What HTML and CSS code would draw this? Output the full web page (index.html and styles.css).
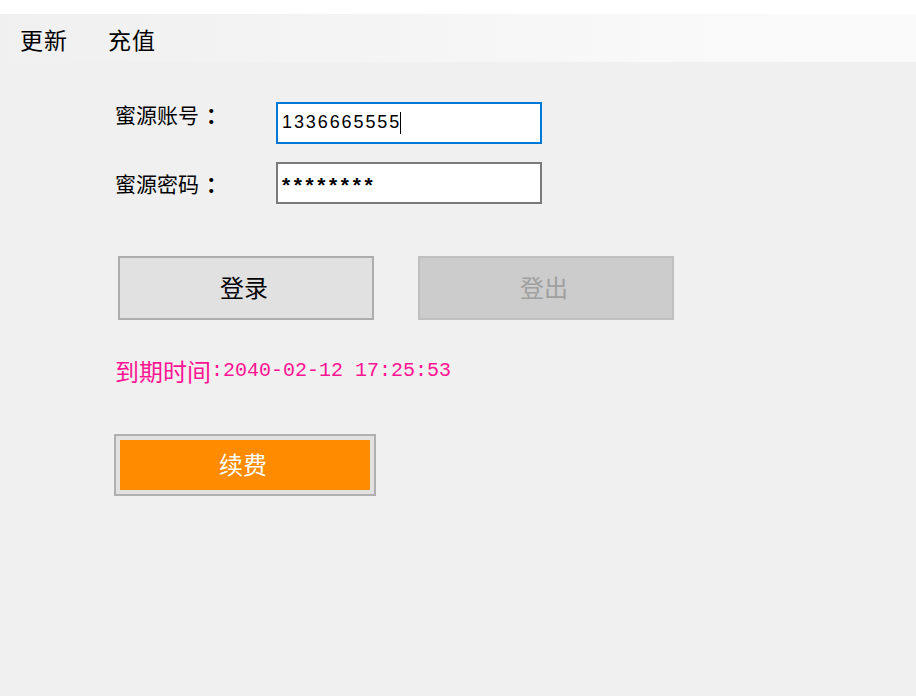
FILE: index.html
```html
<!DOCTYPE html>
<html lang="zh-CN">
<head>
<meta charset="utf-8">
<title>蜜源</title>
<link rel="stylesheet" href="styles.css">
</head>
<body>
<div class="top-strip"></div>
<nav class="menubar">
  <span class="menu-item">更新</span>
  <span class="menu-item">充值</span>
</nav>
<main class="content">
  <div class="form">
    <label class="label">蜜源账号<span class="colon">：</span></label>
    <div class="input input-focus"><span class="value">1336665555</span><span class="caret"></span></div>
    <label class="label label-second">蜜源密码<span class="colon">：</span></label>
    <div class="input"><span class="value value-pw">********</span></div>
  </div>
  <div class="buttons">
    <button class="btn">登录</button>
    <button class="btn btn-disabled" disabled>登出</button>
  </div>
  <div class="expiry"><span class="expiry-cn">到期时间</span><span class="expiry-num">:2040-02-12 17:25:53</span></div>
  <div class="renew-wrap">
    <button class="renew">续费</button>
  </div>
</main>
</body>
</html>
```
FILE: styles.css
```css
html, body {
  margin: 0;
  padding: 0;
}
body {
  width: 916px;
  height: 696px;
  background: #f0f0f0;
  font-family: "Noto Sans CJK SC", "Noto Sans", sans-serif;
  color: #000;
  overflow: hidden;
}
.top-strip {
  height: 14px;
  background: #ffffff;
}
.menubar {
  height: 48px;
  display: flex;
  align-items: center;
  padding-left: 20px;
  gap: 40px;
  background: linear-gradient(to right, #f0f0f0 0%, #f4f4f4 40%, #f9f9f9 75%, #fafafa 100%);
}
.menu-item {
  font-size: 23px;
  line-height: 24px;
  letter-spacing: 1px;
  margin-top: 2px;
}
.content {
  padding: 40px 0 0 115px;
}
.form {
  display: grid;
  grid-template-columns: 161px 266px;
  grid-auto-rows: 42px;
  row-gap: 18px;
}
.label {
  font-size: 21px;
  line-height: 24px;
  padding-top: 0;
}
.colon {
  margin-left: 7px;
  font-weight: bold;
}
.label-second {
  padding-top: 9px;
}
.input {
  box-sizing: border-box;
  background: #fff;
  border: 2px solid #7a7a7a;
  display: flex;
  align-items: center;
  padding-left: 4px;
}
.input-focus {
  border-color: #0078d7;
}
.value {
  font-family: "Liberation Sans", Arial, sans-serif;
  font-size: 18px;
  letter-spacing: 1.9px;
  margin-top: -2px;
}
.value-pw {
  font-weight: bold;
  letter-spacing: 3.6px;
  font-size: 21px;
  margin-top: 4px;
}
.caret {
  display: inline-block;
  width: 1px;
  height: 22px;
  background: #000;
  margin-left: -1px;
}
.buttons {
  display: flex;
  gap: 44px;
  margin-top: 52px;
  padding-left: 3px;
}
.btn {
  width: 256px;
  height: 64px;
  box-sizing: border-box;
  background: #e1e1e1;
  border: 2px solid #adadad;
  font-family: "Noto Sans CJK SC", sans-serif;
  font-size: 24px;
  line-height: 24px;
  color: #000;
  padding: 0 4px 2px 0;
}
.btn-disabled {
  background: #cccccc;
  border-color: #bfbfbf;
  color: #a0a0a0;
}
.expiry {
  margin-top: 38px;
  color: #ff1493;
  height: 26px;
  display: flex;
  align-items: center;
}
.expiry-cn {
  font-size: 24px;
  line-height: 26px;
}
.expiry-num {
  font-family: "Liberation Mono", monospace;
  font-size: 20px;
  line-height: 26px;
}
.renew-wrap {
  margin-top: 50px;
  margin-left: -1px;
}
.renew {
  box-sizing: border-box;
  width: 262px;
  height: 62px;
  border: 2px solid #b0b0b0;
  padding: 0 4px 2px 0;
  background: #ff8c00;
  box-shadow: inset 0 0 0 4px #e1e1e1;
  color: #fff;
  font-family: "Noto Sans CJK SC", sans-serif;
  font-size: 24px;
  line-height: 24px;
}
```
